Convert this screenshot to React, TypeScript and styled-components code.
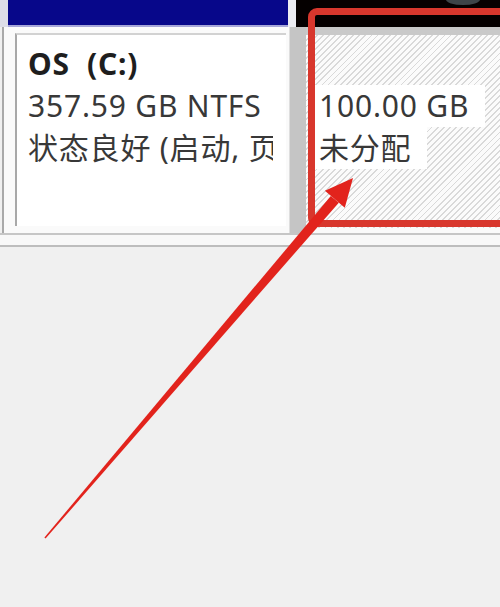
import React from 'react';
import styled, { createGlobalStyle } from 'styled-components';

const GlobalStyle = createGlobalStyle`
  html, body {
    margin: 0;
    padding: 0;
    background: #f0f0f0;
  }
`;

const Page = styled.div`
  position: relative;
  width: 500px;
  height: 607px;
  overflow: hidden;
  background: #f0f0f0;
  font-family: "Noto Sans", "Open Sans", "Noto Sans CJK SC", sans-serif;
`;

const Header = styled.div`
  display: flex;
  height: 27px;
`;

const HeaderPad = styled.div<{ $w: number; $bg: string }>`
  width: ${p => p.$w}px;
  background: ${p => p.$bg};
`;

const BlueBar = styled.div`
  width: 280px;
  background: #07078a;
  border-bottom: 2px solid #a6a6d8;
`;

const BlackBar = styled.div`
  position: relative;
  flex: 1;
  background: #050000;
`;

const CursorBlob = styled.span`
  position: absolute;
  top: -6px;
  left: 150px;
  width: 34px;
  height: 11px;
  border-radius: 50%;
  background: #3c4448;
`;

const DiskRow = styled.div`
  display: flex;
  height: 206px;
`;

const PartitionCell = styled.div`
  display: flex;
  flex: none;
  width: 271px;
  margin-left: 2px;
  border-left: 2px solid #a9a9a9;
  padding: 6px 3px 7px 11px;
  background: #fafafa;
`;

const PartitionBody = styled.div`
  flex: 1;
  min-width: 0;
  display: flex;
  background: #ffffff;
  border-left: 2px solid #a8a8a8;
  border-top: 2px solid #d2d2d2;
`;

const Lines = styled.div<{ $clip?: number }>`
  flex: 1;
  min-width: 0;
  overflow: hidden;
  margin-right: ${p => p.$clip ?? 0}px;
  padding: 8px 0 0 11px;
`;

const Line = styled.div<{ $bold?: boolean }>`
  height: 42px;
  line-height: 42px;
  font-size: 30px;
  letter-spacing: 0.8px;
  white-space: nowrap;
  color: ${p => (p.$bold ? '#1e1e1e' : '#383838')};
  font-weight: ${p => (p.$bold ? 700 : 400)};
`;

const Separator = styled.div`
  flex: none;
  width: 16px;
  background: #c5c5c5;
  border-left: 1px solid #dedede;
`;

const UnallocatedCell = styled.div`
  flex: 1;
  min-width: 0;
  display: flex;
  flex-direction: column;
  background: #fafafa;
  border-top: 8px solid #c9c9c9;
  padding-bottom: 5px;
`;

const Hatch = styled.div`
  flex: 1;
  padding: 8px 0 0 13px;
  background: repeating-linear-gradient(
    135deg,
    #fbfbfb 0 3px,
    #d9d9d9 3px 4.3px
  );
`;

const Label = styled.span`
  display: inline-block;
  padding-right: 16px;
  margin-left: -6px;
  padding-left: 6px;
  background: #ffffff;
`;

const BottomEdge = styled.div`
  height: 10px;
  background: #f8f8f8;
  border-top: 2px solid #c6c6c6;
  border-bottom: 2px solid #bdbdbd;
`;

const Highlight = styled.div`
  position: absolute;
  left: 308px;
  top: 8px;
  width: 230px;
  height: 219px;
  box-sizing: border-box;
  border: 7px solid #d8372d;
  border-radius: 9px;
`;

const ArrowLayer = styled.svg`
  position: absolute;
  left: 0;
  top: 0;
  pointer-events: none;
`;

const Arrow = () => (
  <ArrowLayer width={500} height={607} viewBox="0 0 500 607">
    <polygon
      points="45.6,538.5 44.4,537.5 330.8,195.9 338.8,202.7"
      fill="#e2231c"
    />
    <polygon points="353,178 324.9,190.8 344.8,207.7" fill="#e2231c" />
  </ArrowLayer>
);

export default function App() {
  return (
    <>
      <GlobalStyle />
      <Page>
        <Header>
          <HeaderPad $w={8} $bg="#dedee8" />
          <BlueBar />
          <HeaderPad $w={8} $bg="#ececf2" />
          <BlackBar>
            <CursorBlob />
          </BlackBar>
        </Header>
        <DiskRow>
          <PartitionCell>
            <PartitionBody>
              <Lines $clip={13}>
                <Line $bold>OS&nbsp;&nbsp;(C:)</Line>
                <Line>357.59 GB NTFS</Line>
                <Line>状态良好 (启动, 页面文件, 故障转储, 基本数据分区)</Line>
              </Lines>
            </PartitionBody>
          </PartitionCell>
          <Separator />
          <UnallocatedCell>
            <Hatch>
              <Line />
              <Line>
                <Label>100.00 GB</Label>
              </Line>
              <Line>
                <Label>未分配</Label>
              </Line>
            </Hatch>
          </UnallocatedCell>
        </DiskRow>
        <BottomEdge />
        <Highlight />
        <Arrow />
      </Page>
    </>
  );
}
